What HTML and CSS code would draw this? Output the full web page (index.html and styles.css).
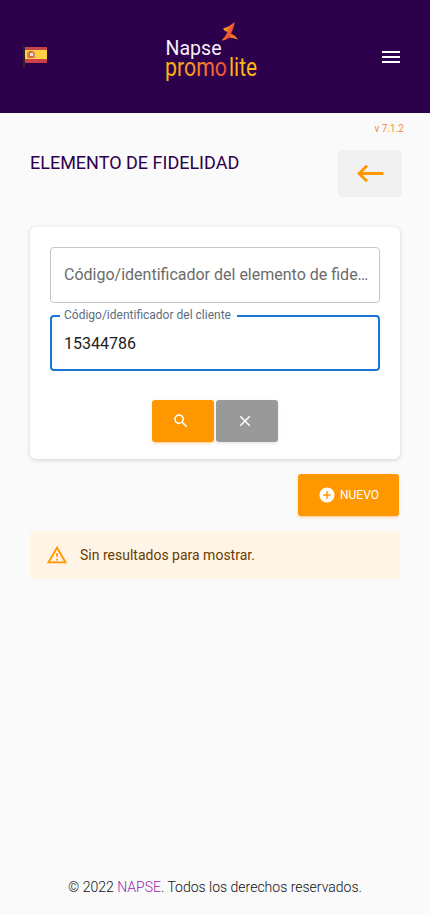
FILE: index.html
```html
<!DOCTYPE html>
<html lang="es">
<head>
<meta charset="utf-8">
<meta name="viewport" content="width=device-width, initial-scale=1">
<title>Elemento de fidelidad</title>
<link rel="stylesheet" href="styles.css">
</head>
<body>
<header class="topbar">
  <svg class="flag" width="25" height="22" viewBox="0 0 25 22" aria-label="Español">
    <path fill="#29242f" d="M0 0h2v22H0z"/>
    <path fill="#c84349" d="M2 1h22v16H2z"/>
    <path fill="#ffd044" d="M2 4h22v9H2z"/>
    <path fill="#d98a45" d="M4 6h2v6H4zM10 6h2v6h-2z"/>
    <path fill="#ce6950" d="M6 5h4v7H6z"/>
    <path fill="#eadbd9" d="M7 7h3v3H7z"/>
  </svg>
  <svg class="logo" width="94" height="64" viewBox="0 0 94 64">
    <defs>
      <linearGradient id="promo" x1="0" x2="1"><stop offset="0" stop-color="#fdb515"/><stop offset=".4" stop-color="#f59a25"/><stop offset="1" stop-color="#ef4938"/></linearGradient>
      <linearGradient id="star" gradientUnits="userSpaceOnUse" x1="56" y1="10" x2="73" y2="20"><stop offset="0" stop-color="#fdb515"/><stop offset=".4" stop-color="#ee4c35"/><stop offset="1" stop-color="#fdb515"/></linearGradient>
    </defs>
    <path fill="url(#star)" d="M68.500 2Q63 7 57 8.500Q58 11 61.500 12Q60 16 55.500 20.500Q60 20.500 63.500 17.500Q67.500 18 72 19.500Q69.500 15.500 65 13.500Q68.500 7 68.500 2Z"/>
    <text class="logo-name" x="-.5" y="34.500" textLength="56" lengthAdjust="spacingAndGlyphs">Napse</text>
    <text class="logo-product" x="-1" y="56" textLength="62" lengthAdjust="spacingAndGlyphs" fill="url(#promo)">promo</text>
    <text class="logo-product logo-lite" x="63" y="56" textLength="28" lengthAdjust="spacingAndGlyphs">lite</text>
  </svg>
  <svg class="menu" width="24" height="24" viewBox="0 0 24 24"><path fill="#fff" d="M3 18h18v-2H3v2zm0-5h18v-2H3v2zm0-7v2h18V6H3z"/></svg>
</header>
<main class="content">
  <div class="version">v 7.1.2</div>
  <div class="heading">
    <h1>ELEMENTO DE FIDELIDAD</h1>
    <button class="back" aria-label="Volver"><svg width="28" height="20" viewBox="0 0 28 20" fill="none" stroke="#ff9800" stroke-width="3"><path d="M27.500 9.500H3M11 1.700L3.200 9.500l7.800 7.800"/></svg></button>
  </div>
  <section class="card">
    <div class="field"><span class="placeholder">Código/identificador del elemento de fide…</span></div>
    <fieldset class="field focused">
      <legend>Código/identificador del cliente</legend>
      <span class="value">15344786</span>
    </fieldset>
    <div class="actions">
      <button class="btn" aria-label="Buscar"><svg width="18" height="18" viewBox="0 0 24 24"><path fill="#fff" d="M15.500 14h-.79l-.28-.27C15.410 12.590 16 11.110 16 9.500 16 5.910 13.090 3 9.500 3S3 5.910 3 9.500 5.910 16 9.500 16c1.610 0 3.090-.59 4.230-1.570l.27.28v.79l5 4.990L20.490 19l-4.990-5zm-6 0C7.010 14 5 11.990 5 9.500S7.010 5 9.500 5 14 7.010 14 9.500 11.990 14 9.500 14z"/></svg></button>
      <button class="btn clear" aria-label="Limpiar"><svg width="18" height="18" viewBox="0 0 24 24"><path fill="#fff" d="M19 6.410L17.590 5 12 10.590 6.410 5 5 6.410 10.590 12 5 17.590 6.410 19 12 13.410 17.590 19 19 17.590 13.410 12z"/></svg></button>
    </div>
  </section>
  <button class="btn new"><svg width="18" height="18" viewBox="0 0 24 24"><path fill="#fff" d="M12 2C6.480 2 2 6.480 2 12s4.480 10 10 10 10-4.480 10-10S17.520 2 12 2zm5 11h-4v4h-2v-4H7v-2h4V7h2v4h4v2z"/></svg><span>NUEVO</span></button>
  <div class="alert">
    <svg width="22" height="22" viewBox="0 0 24 24"><path fill="#ff9800" d="M12 5.990L19.530 19H4.470L12 5.990M12 2L1 21h22L12 2zm1 14h-2v2h2v-2zm0-6h-2v4h2v-4z"/></svg>
    <span>Sin resultados para mostrar.</span>
  </div>
</main>
<footer>© 2022 <a>NAPSE</a>. Todos los derechos reservados.</footer>
</body>
</html>
```
FILE: styles.css
```css
* { box-sizing: border-box; }
body {
  margin: 0;
  height: 915px;
  display: flex;
  flex-direction: column;
  background: #fafafa;
  font-family: Roboto, "Liberation Sans", sans-serif;
  overflow: hidden;
}
svg { display: block; flex: none; }
button { border: 0; font-family: inherit; }
.topbar {
  height: 113px;
  flex: none;
  display: flex;
  align-items: center;
  justify-content: space-between;
  padding: 0 27px 0 23px;
  background: #2d004b;
}
.logo { margin: -9px 0 0 -6px; transform: translateX(2px); overflow: visible; }
.logo text { font-family: Roboto, sans-serif; }
.logo-name { font-size: 20.500px; fill: #f5f0f7; }
.logo-product { font-size: 25px; }
.logo-lite { fill: #fdb515; }
.content { padding: 0 30px; flex: 1; display: flex; flex-direction: column; }
.version {
  height: 37px;
  padding-top: 10px;
  margin-right: -4px;
  text-align: right;
  font-size: 10px;
  line-height: 12px;
  color: #f58a35;
}
.heading { display: flex; justify-content: space-between; height: 77px; margin-right: -2px; }
h1 { margin: 2px 0 0; font-size: 18px; font-weight: 400; line-height: 22px; color: #2d004b; }
.back {
  width: 64px;
  height: 47px;
  border-radius: 4px;
  background: #f1f1f1;
  display: flex;
  align-items: center;
  justify-content: center;
}
.card {
  height: 232px;
  padding: 20px;
  border-radius: 6px;
  background: #fff;
  box-shadow: 0 1px 4px rgba(0, 0, 0, .16);
}
.field {
  height: 56px;
  margin: 0;
  padding: 0 8px 0 13px;
  border: 1px solid #c4c4c4;
  border-radius: 4px;
  display: flex;
  align-items: center;
  font-size: 16px;
}
.placeholder { color: #6b6b6b; white-space: nowrap; margin-top: -2px; }
.focused {
  display: block;
  height: 63px;
  margin-top: 5px;
  padding: 0 12px 0 8px;
  border: 2px solid #1976d2;
}
legend {
  height: 16px;
  padding: 0 6px 0 4px;
  font-size: 12px;
  line-height: 14px;
  color: #5b6d7e;
}
.value { display: block; padding: 8px 0 0 4px; line-height: 24px; color: #212121; }
.actions { display: flex; justify-content: center; gap: 2px; margin-top: 29px; }
.btn {
  width: 62px;
  height: 42px;
  padding: 0 4px 0 0;
  border-radius: 3px;
  display: flex;
  align-items: center;
  justify-content: center;
  background: #ff9800;
  color: #fff;
  box-shadow: 0 2px 2px rgba(255, 152, 0, .14), 0 1px 5px rgba(255, 152, 0, .12), 0 2px 1px -1px rgba(255, 152, 0, .2);
}
.clear { background: #999; box-shadow: 0 2px 2px rgba(153, 153, 153, .14), 0 1px 5px rgba(153, 153, 153, .12); }
.new {
  width: 101px;
  margin: 15px 1px 0 auto;
  padding: 0;
  gap: 4px;
  font-size: 12px;
  font-weight: 400;
}
.alert {
  height: 48px;
  margin-top: 15px;
  padding-left: 16px;
  border-radius: 4px;
  display: flex;
  align-items: center;
  gap: 12px;
  background: #fff4e5;
  color: #663c00;
  font-size: 14px;
}
footer {
  height: 56px;
  flex: none;
  padding-top: 18px;
  text-align: center;
  font-size: 14px;
  font-weight: 300;
  line-height: 21px;
  color: #111;
}
footer a { color: #9c27b0; }
```
